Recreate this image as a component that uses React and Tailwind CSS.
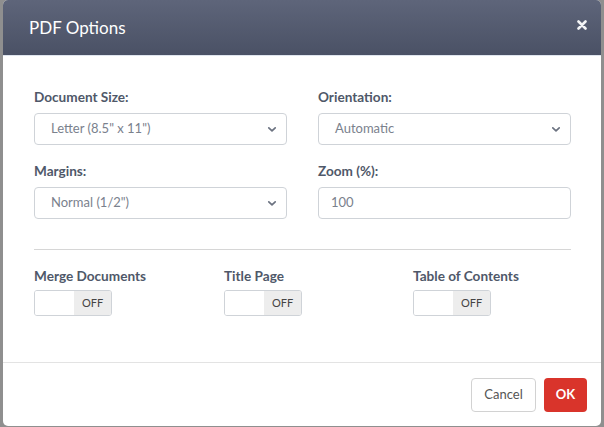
import React from 'react';

const font = { fontFamily: 'Lato, "Open Sans", sans-serif' };

const Chevron = () => (
  <svg width="10" height="7" viewBox="0 0 10 7" className="shrink-0">
    <polyline points="1.8,1.8 5,4.8 8.2,1.8" fill="none" stroke="#6b7280" strokeWidth="1.7" strokeLinecap="round" strokeLinejoin="round" />
  </svg>
);

const Field = ({ label, value, select = true }) => (
  <div className="flex flex-col">
    <label className="text-[13.6px] leading-4 font-bold text-[#4f5869]">{label}</label>
    <div className="mt-2 h-8 flex items-center justify-between rounded-[4px] border border-[#cfd3d8] bg-white pr-[9px] text-[13px] text-[#7a818d]"
      style={{ paddingLeft: select ? 16 : 12 }}>
      <span>{value}</span>
      {select && <Chevron />}
    </div>
  </div>
);

const Toggle = ({ label }) => (
  <div className="flex flex-col">
    <span className="text-[13.6px] leading-4 font-bold text-[#4f5869]">{label}</span>
    <div className="mt-[6px] flex h-[26px] w-[78px] overflow-hidden rounded-[3px] border border-[#cfd3d8]">
      <div className="w-[39px] bg-white" />
      <div className="flex flex-1 items-center justify-center bg-[#ededed] text-[11px] text-[#444]">OFF</div>
    </div>
  </div>
);

export default function App() {
  return (
    <div className="h-[427px] w-[604px] bg-[#8f8f8f] px-[3px]" style={font}>
      <div className="flex h-[426px] flex-col overflow-hidden rounded-[5px] bg-white">
        <div className="flex h-14 items-start justify-between border-b border-[#dfe5ee] bg-gradient-to-b from-[#5e657a] to-[#4a5165] pl-[26px] pr-[14px]">
          <h1 className="mt-[16px] text-[17px] leading-6 text-white">PDF Options</h1>
          <svg width="10" height="10" viewBox="0 0 10 10" className="mt-[20px]">
            <path d="M1.5 1.5 L8.5 8.5 M8.5 1.5 L1.5 8.5" stroke="#f3f4f6" strokeWidth="2.6" strokeLinecap="round" />
          </svg>
        </div>

        <div className="flex-1 pl-[31px] pr-[30px] pt-[33px]">
          <div className="grid grid-cols-2 gap-x-[31px] gap-y-[18px]">
            <Field label="Document Size:" value={'Letter (8.5" x 11")'} />
            <Field label="Orientation:" value="Automatic" />
            <Field label="Margins:" value={'Normal (1/2")'} />
            <Field label="Zoom (%):" value="100" select={false} />
          </div>
          <div className="mt-[30px] border-t border-[#d6d6d6]" />
          <div className="mt-[18px] grid grid-cols-[190px_189px_1fr]">
            <Toggle label="Merge Documents" />
            <Toggle label="Title Page" />
            <Toggle label="Table of Contents" />
          </div>
        </div>

        <div className="flex h-[64px] items-start justify-end gap-2 border-t border-[#e3e3e3] pr-[14px] pt-[15px]">
          <button className="h-[34px] w-[65px] rounded-[4px] border border-[#d2d2d2] bg-white text-[13px] text-[#555]">Cancel</button>
          <button className="h-[34px] w-[43px] rounded-[4px] bg-[#d9342b] text-[13px] font-bold text-white">OK</button>
        </div>
      </div>
    </div>
  );
}
